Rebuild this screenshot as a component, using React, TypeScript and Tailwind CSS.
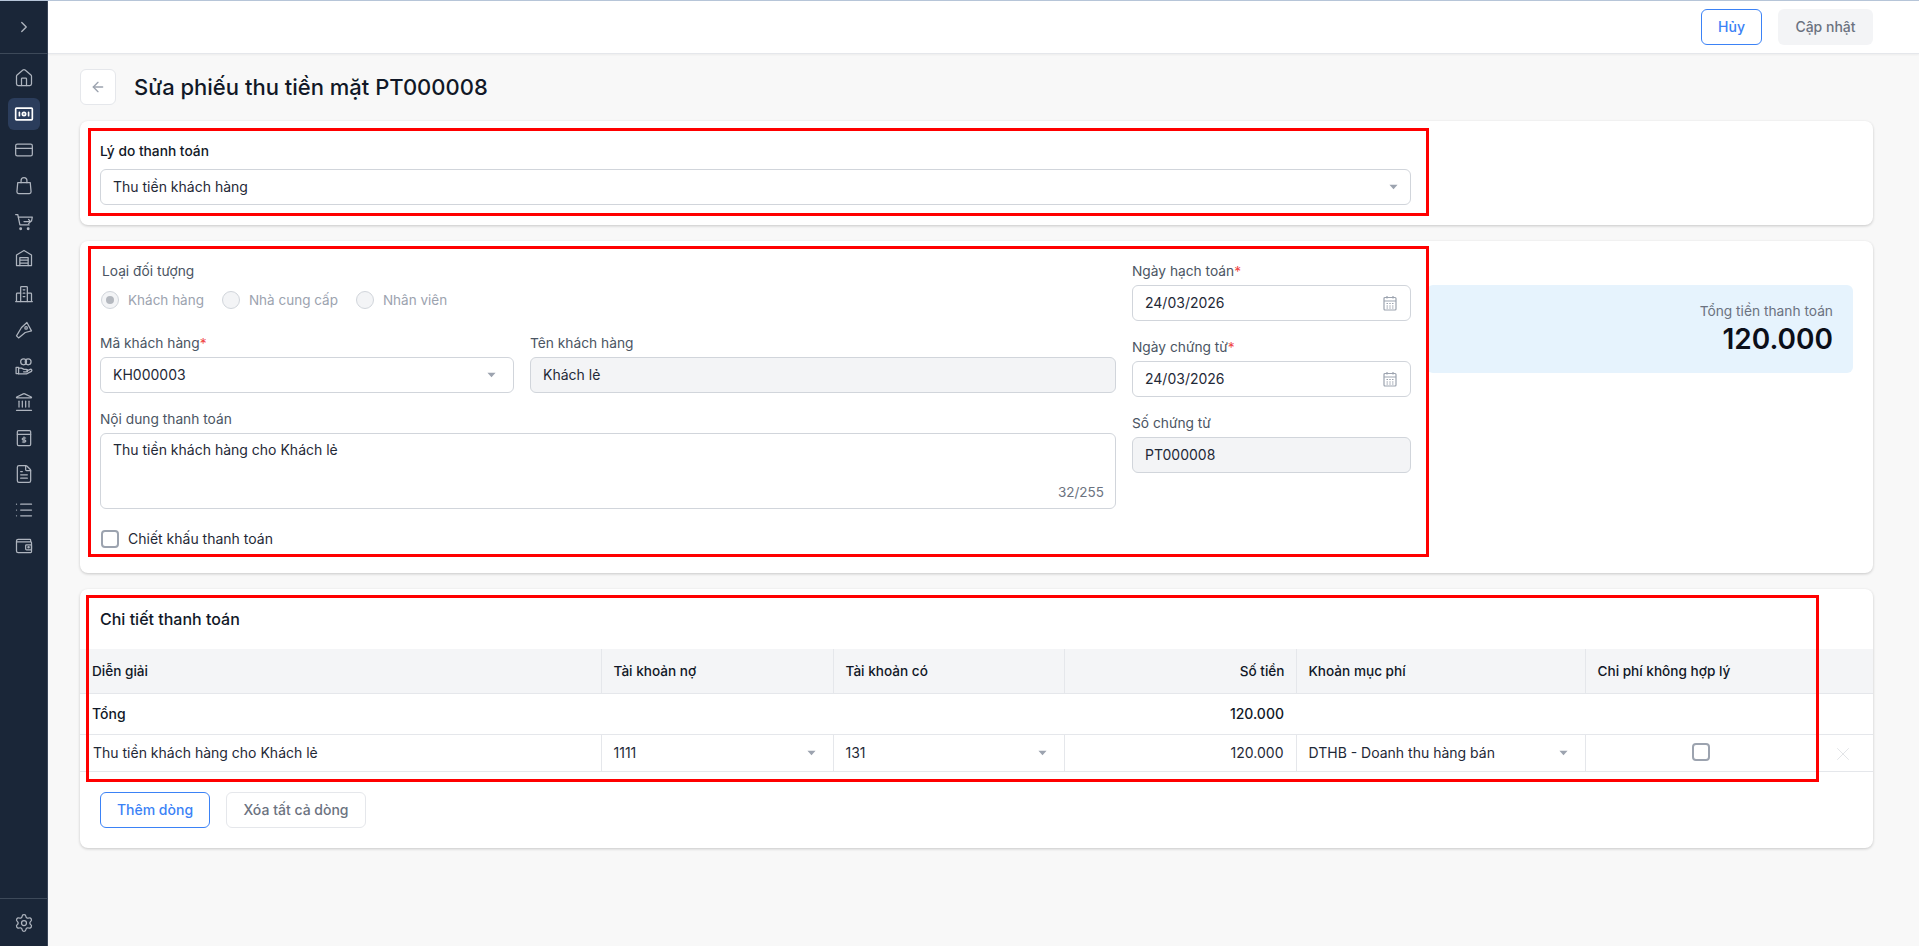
import React from 'react';
import { ArrowLeft, ChevronRight, CreditCard, FileText, House, Landmark, List, Settings, X } from 'lucide-react';

const inputBase = 'h-9 rounded-md border border-[#d1d5db] flex items-center text-sm text-[#1f2937]';

const iconProps = {
  width: 20,
  height: 20,
  viewBox: '0 0 24 24',
  fill: 'none',
  stroke: 'currentColor',
  strokeWidth: 1.5,
  strokeLinecap: 'round' as const,
  strokeLinejoin: 'round' as const,
};

function CashIcon() {
  return (
    <svg {...iconProps} strokeWidth={2}>
      <rect x="2" y="5" width="20" height="14" rx="1" />
      <path d="M6.5 10v4M17.5 10v4" />
      <circle cx="12" cy="12" r="2" />
    </svg>
  );
}

function BagIcon() {
  return (
    <svg {...iconProps}>
      <path d="M4.5 8h15l1 11a2 2 0 0 1-2 2h-13a2 2 0 0 1-2-2z" />
      <path d="M8.5 8V5.5a3.5 3.5 0 0 1 7 0V8" />
    </svg>
  );
}

function CartIcon() {
  return (
    <svg {...iconProps}>
      <path d="M2 3h2.5l2.6 12.5h11" />
      <path d="M5.2 6H22l-1 5" />
      <path d="M12 11.5h8M17.5 9l2.5 2.5-2.5 2.5" />
      <circle cx="8" cy="20" r="1" fill="currentColor" />
      <circle cx="17" cy="20" r="1" fill="currentColor" />
    </svg>
  );
}

function WarehouseIcon() {
  return (
    <svg {...iconProps}>
      <path d="M3 21V8.5L12 3l9 5.5V21z" />
      <path d="M7 21v-9.5h10V21M7 14.5h10M7 18h10" />
    </svg>
  );
}

function BuildingIcon() {
  return (
    <svg {...iconProps}>
      <path d="M8 21V4a1 1 0 0 1 1-1h6a1 1 0 0 1 1 1v17" />
      <path d="M8 11H4a1 1 0 0 0-1 1v9M16 11h4a1 1 0 0 1 1 1v9M2 21h20" />
      <path d="M11 7h2M11 11h2M11 15h2" />
    </svg>
  );
}

function ToolIcon() {
  return (
    <svg {...iconProps}>
      <path d="M9 9 15.5 3 21 13l-7.5 2-8 6.5L3 19z" />
      <circle cx="14.5" cy="9.5" r="1.5" />
    </svg>
  );
}

function HandIcon() {
  return (
    <svg {...iconProps}>
      <path d="M2.5 13.5h3v7.5h-3z" />
      <path d="M5.5 14.5H9l3 1.5h3a1.5 1.5 0 0 1 0 3h-3.5" />
      <path d="M15 18l4.5-2a1.5 1.5 0 0 1 1.5 2.5L15 21.5H5.5" />
      <circle cx="11.5" cy="7" r="3.5" />
      <circle cx="17" cy="7" r="3.5" />
    </svg>
  );
}

function BookDollarIcon() {
  return (
    <svg {...iconProps}>
      <rect x="4" y="3" width="16" height="18" rx="1.5" />
      <path d="M4 7.5h16" />
      <path d="M12 10.5v7M14 12h-3a1.2 1.2 0 0 0 0 2.4h2a1.2 1.2 0 0 1 0 2.4h-3" strokeWidth={1.3} />
    </svg>
  );
}

function WalletIcon() {
  return (
    <svg {...iconProps}>
      <path d="M20 7V5a1 1 0 0 0-1-1H5a2 2 0 0 0-2 2v12a2 2 0 0 0 2 2h15a1 1 0 0 0 1-1V8a1 1 0 0 0-1-1H3" />
      <rect x="14" y="10.5" width="7" height="6" rx="1" />
      <circle cx="17.5" cy="13.5" r="0.8" />
    </svg>
  );
}

function CalendarIcon() {
  return (
    <svg width="16" height="16" viewBox="0 0 16 16" fill="none" stroke="#9ca3af" strokeWidth="1.2">
      <rect x="2" y="2.5" width="12" height="12.5" rx="1" />
      <path d="M2 6h12M5 1v2.5M11 1v2.5" />
      <path d="M4.5 8.5h1.5M7.25 8.5h1.5M10 8.5h1.5M4.5 11h1.5M7.25 11h1.5M10 11h1.5M4.5 13h1.5M7.25 13h1.5M10 13h1.5" strokeWidth="1" />
    </svg>
  );
}

function Caret() {
  return (
    <svg width="9" height="6" viewBox="0 0 10 6" fill="#9ca3af">
      <path d="M0.5 0.5h9L5 5.5z" />
    </svg>
  );
}

const navItems = [
  <House size={20} strokeWidth={1.5} />,
  <CashIcon />,
  <CreditCard size={20} strokeWidth={1.5} />,
  <BagIcon />,
  <CartIcon />,
  <WarehouseIcon />,
  <BuildingIcon />,
  <ToolIcon />,
  <HandIcon />,
  <Landmark size={20} strokeWidth={1.5} />,
  <BookDollarIcon />,
  <FileText size={20} strokeWidth={1.5} />,
  <List size={20} strokeWidth={1.5} />,
  <WalletIcon />,
];

function Sidebar() {
  return (
    <aside className="w-12 shrink-0 bg-[#1a2638] text-[#aeb4be] flex flex-col border-r border-[#3a4659]">
      <div className="h-[53px] shrink-0 flex items-center justify-center border-b border-[#3d4959]">
        <ChevronRight size={18} strokeWidth={1.8} />
      </div>
      <nav className="flex-1 flex flex-col items-center gap-1 pt-2">
        {navItems.map((icon, i) => (
          <div key={i} className={`w-8 h-8 rounded-md flex items-center justify-center ${i === 1 ? 'bg-[#2b3d5c] text-white' : ''}`}>
            {icon}
          </div>
        ))}
      </nav>
      <div className="h-12 shrink-0 flex items-center justify-center border-t border-[#3d4959]">
        <Settings size={20} strokeWidth={1.5} />
      </div>
    </aside>
  );
}

function Label({ children, required }: { children: React.ReactNode; required?: boolean }) {
  return (
    <div className="text-[13.75px] leading-5 text-[#4b5563] mb-1">
      {children}
      {required && <span className="text-[#ef4444]">*</span>}
    </div>
  );
}

function Radio({ label, checked }: { label: string; checked?: boolean }) {
  return (
    <div className="flex items-center gap-[9px]">
      <span className="w-[18px] h-[18px] rounded-full border border-[#d1d5db] bg-[#f3f4f6] flex items-center justify-center">
        {checked && <span className="w-2 h-2 rounded-full bg-[#b4b8bf]" />}
      </span>
      <span className="text-[13.5px] text-[#9ca3af]">{label}</span>
    </div>
  );
}

function DateField({ label, value }: { label: string; value: string }) {
  return (
    <div>
      <Label required>{label}</Label>
      <div className={`${inputBase} px-3 justify-between bg-white`}>
        <span>{value}</span>
        <CalendarIcon />
      </div>
    </div>
  );
}

function RedBox({ className }: { className: string }) {
  return <div className={`absolute border-[3px] border-[#ff0000] pointer-events-none ${className}`} />;
}

const thClass = 'h-[44px] px-3 text-[13.6px] font-medium text-[#111827] text-left border-l border-[#e5e7eb] first:border-l-0';
const tdClass = 'h-[37px] px-3 text-sm text-[#1f2937] border-l border-[#e5e7eb] first:border-l-0';

function CellSelect({ value }: { value: string }) {
  return (
    <div className="flex items-center justify-between pr-[5px]">
      <span>{value}</span>
      <Caret />
    </div>
  );
}

export default function App() {
  return (
    <div className="h-[946px] flex flex-col border-t border-[#b6c5d8] bg-[#f8f8f8] font-[Inter,sans-serif] overflow-hidden">
      <div className="flex flex-1 min-h-0">
        <Sidebar />
        <div className="flex-1 min-w-0 flex flex-col">
          <header className="h-[53px] shrink-0 bg-white border-b border-[#e5e7eb] shadow-[0_1px_2px_rgba(0,0,0,0.05)] flex items-center justify-end gap-4 pr-[46px]">
            <button className="w-[61px] h-9 rounded-md border border-[#3b82f6] text-sm font-medium text-[#3b82f6]">Hủy</button>
            <button className="w-[95px] h-9 rounded-md bg-[#f3f4f6] text-sm font-medium text-[#6b7280]">Cập nhật</button>
          </header>

          <main className="flex-1 pl-8 pr-[46px] pt-[15px]">
            <div className="flex items-center gap-[18px] mb-4">
              <button className="w-9 h-9 rounded-md border border-[#e5e7eb] bg-white flex items-center justify-center text-[#9ca3af]">
                <ArrowLeft size={16} />
              </button>
              <h1 className="text-[22px] leading-8 font-medium text-[#111827]">Sửa phiếu thu tiền mặt PT000008</h1>
            </div>

            <section className="relative bg-white rounded-lg shadow-[0_1px_3px_rgba(0,0,0,0.2)] px-5 pt-5 pb-5 mb-4">
              <div className="text-[13.75px] leading-5 font-medium text-[#111827] mb-2">Lý do thanh toán</div>
              <div className={`${inputBase} w-[1311px] px-3 justify-between bg-white`}>
                <span>Thu tiền khách hàng</span>
                <Caret />
              </div>
              <RedBox className="left-2 top-[7px] bottom-[9px] w-[1341px]" />
            </section>

            <section className="relative bg-white rounded-lg shadow-[0_1px_3px_rgba(0,0,0,0.2)] px-5 pt-5 pb-6 mb-4 flex gap-4 items-start">
              <div className="w-[1311px] shrink-0 flex gap-4">
                <div className="w-[1016px] shrink-0">
                  <div className="pl-0.5 text-[13.75px] leading-5 text-[#4b5563]">Loại đối tượng</div>
                  <div className="flex gap-[18px] pl-px mt-[9px] mb-[23px] h-5">
                    <Radio label="Khách hàng" checked />
                    <Radio label="Nhà cung cấp" />
                    <Radio label="Nhân viên" />
                  </div>
                  <div className="flex gap-4 mb-4">
                    <div className="w-[414px] shrink-0">
                      <Label required>Mã khách hàng</Label>
                      <div className={`${inputBase} pl-3 pr-[17px] justify-between bg-white`}>
                        <span>KH000003</span>
                        <Caret />
                      </div>
                    </div>
                    <div className="flex-1">
                      <Label>Tên khách hàng</Label>
                      <div className={`${inputBase} px-3 bg-[#f3f4f6]`}>Khách lẻ</div>
                    </div>
                  </div>
                  <Label>Nội dung thanh toán</Label>
                  <div className="relative h-[76px] rounded-md border border-[#d1d5db] bg-white px-3 py-1.5 text-sm leading-5 text-[#1f2937]">
                    Thu tiền khách hàng cho Khách lẻ
                    <span className="absolute right-[11px] bottom-1.5 text-[13.5px] text-[#6b7280]">32/255</span>
                  </div>
                  <div className="flex items-center gap-[9px] pl-px mt-5 h-5">
                    <span className="w-[18px] h-[18px] rounded-[4px] border-2 border-[#9ca3af] bg-white" />
                    <span className="text-sm text-[#1f2937]">Chiết khấu thanh toán</span>
                  </div>
                </div>
                <div className="flex-1 flex flex-col gap-4">
                  <DateField label="Ngày hạch toán" value="24/03/2026" />
                  <DateField label="Ngày chứng từ" value="24/03/2026" />
                  <div>
                    <Label>Số chứng từ</Label>
                    <div className={`${inputBase} px-3 bg-[#f3f4f6]`}>PT000008</div>
                  </div>
                </div>
              </div>
              <div className="flex-1 h-[88px] mt-6 rounded-md bg-[#e6f3fd] flex flex-col items-end justify-center pr-5">
                <div className="text-[13.75px] leading-5 text-[#6b7280]">Tổng tiền thanh toán</div>
                <div className="text-[28px] leading-9 font-semibold text-[#0b0f19]">120.000</div>
              </div>
              <RedBox className="left-2 top-[5px] bottom-4 w-[1341px]" />
            </section>

            <section className="relative bg-white rounded-lg shadow-[0_1px_3px_rgba(0,0,0,0.2)] pt-5 pb-5">
              <h2 className="px-5 text-base leading-5 font-medium text-[#111827] mb-5">Chi tiết thanh toán</h2>
              <table className="w-full table-fixed border-collapse">
                <colgroup>
                  <col className="w-[521px]" />
                  <col className="w-[232px]" />
                  <col className="w-[231px]" />
                  <col className="w-[232px]" />
                  <col className="w-[289px]" />
                  <col className="w-[231px]" />
                  <col />
                </colgroup>
                <thead>
                  <tr className="bg-[#f4f5f7] border-b border-[#e5e7eb]">
                    <th className={thClass}>Diễn giải</th>
                    <th className={thClass}>Tài khoản nợ</th>
                    <th className={thClass}>Tài khoản có</th>
                    <th className={`${thClass} text-right pr-[11px]`}>Số tiền</th>
                    <th className={thClass}>Khoản mục phí</th>
                    <th className={thClass}>Chi phí không hợp lý</th>
                    <th className={`${thClass} border-l-0`} />
                  </tr>
                </thead>
                <tbody>
                  <tr className="h-[41px] border-b border-[#e5e7eb] text-sm font-medium text-[#111827]">
                    <td className="px-3">Tổng</td>
                    <td />
                    <td />
                    <td className="px-3 text-right">120.000</td>
                    <td />
                    <td />
                    <td />
                  </tr>
                  <tr className="border-b border-[#e5e7eb]">
                    <td className={`${tdClass} pl-[13px]`}>Thu tiền khách hàng cho Khách lẻ</td>
                    <td className={tdClass}><CellSelect value="1111" /></td>
                    <td className={tdClass}><CellSelect value="131" /></td>
                    <td className={`${tdClass} text-right`}>120.000</td>
                    <td className={tdClass}><CellSelect value="DTHB - Doanh thu hàng bán" /></td>
                    <td className={tdClass}>
                      <div className="flex justify-center mb-0.5">
                        <span className="w-[18px] h-[18px] rounded-[4px] border-2 border-[#9ca3af] bg-white" />
                      </div>
                    </td>
                    <td className="text-center text-[#e0e2e6] pr-1">
                      <X size={22} strokeWidth={1} className="inline-block" />
                    </td>
                  </tr>
                </tbody>
              </table>
              <div className="flex gap-4 px-5 mt-5">
                <button className="w-[110px] h-9 rounded-md border border-[#3b82f6] text-sm font-medium text-[#3b82f6]">Thêm dòng</button>
                <button className="w-[140px] h-9 rounded-md border border-[#e5e7eb] text-sm font-medium text-[#6b7280]">Xóa tất cả dòng</button>
              </div>
              <RedBox className="left-1.5 top-1.5 h-[187px] w-[1733px]" />
            </section>
          </main>
        </div>
      </div>
    </div>
  );
}
